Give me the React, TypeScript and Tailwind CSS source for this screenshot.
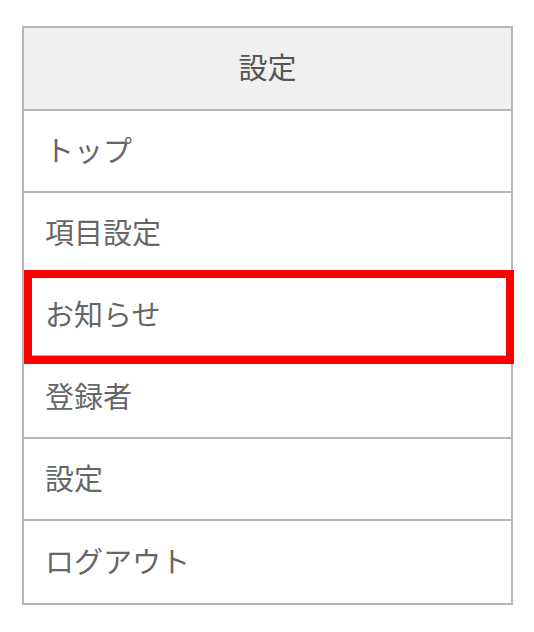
import React from "react";

const items = ["トップ", "項目設定", "お知らせ", "登録者", "設定", "ログアウト"];

export default function App() {
  return (
    <div
      className="min-h-[632px] w-[534px] bg-white pt-[26px] pl-[22px]"
      style={{ fontFamily: '"Noto Sans CJK JP", "Noto Sans", sans-serif' }}
    >
      <div className="relative w-[491px] border-2 border-[#b5b5b5]">
        <div className="flex h-[83px] items-center justify-center border-b-2 border-[#b5b5b5] bg-[#f0f0f0] pb-[4px] text-[29px] leading-none text-[#555555]">
          設定
        </div>
        {items.map((t, i) => (
          <div
            key={i}
            className={`relative flex h-[82px] items-center pb-[4px] pl-[21px] text-[29px] leading-none text-[#666666] ${
              i < items.length - 1 ? "border-b-2 border-[#b5b5b5]" : "h-[80px]"
            }`}
          >
            {t}
            {i === 2 && (
              <div className="pointer-events-none absolute left-0 top-[-5px] h-[94px] w-[490px] border-8 border-[#ff0000]" />
            )}
          </div>
        ))}
      </div>
    </div>
  );
}
